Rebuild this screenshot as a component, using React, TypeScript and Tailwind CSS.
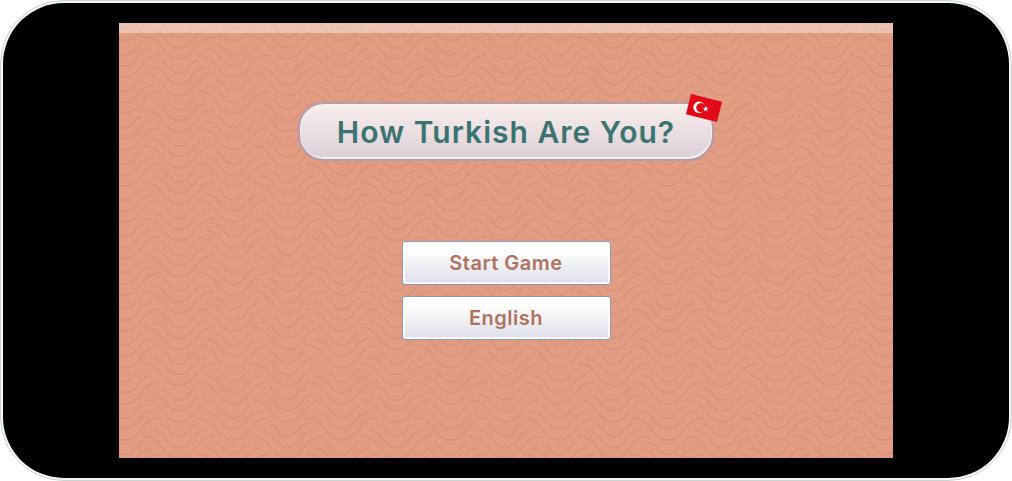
import { useState } from "react";

function WavePattern() {
  return (
    <svg className="absolute inset-0 h-full w-full" aria-hidden="true">
      <defs>
        <g id="waves" fill="none" stroke="#d8947b" strokeWidth="2" strokeLinecap="round">
          <path d="M-35 -22C-16 -22 -17 0 0 0S16 -22 35 -22" />
          <path d="M-26 -28C-13 -27 -13 -11 0 -11S13 -27 26 -28" />
          <path d="M-17 -34C-9 -31 -9 -22 0 -22S9 -31 17 -34" />
        </g>
        <pattern id="tile" width="108.6" height="36.3" x="5.8" y="0" patternUnits="userSpaceOnUse">
          <use href="#waves" x="54.3" y="-.3" />
          <use href="#waves" x="54.3" y="36" />
          <use href="#waves" x="54.3" y="72.3" />
          <use href="#waves" x="0" y="17.8" />
          <use href="#waves" x="0" y="54.1" />
          <use href="#waves" x="108.6" y="17.8" />
          <use href="#waves" x="108.6" y="54.1" />
        </pattern>
      </defs>
      <rect width="100%" height="100%" fill="url(#tile)" />
    </svg>
  );
}

function TurkishFlag() {
  return (
    <svg viewBox="0 0 36 28" className="absolute -top-[10px] -right-[10px] h-7 w-9" aria-hidden="true">
      <g transform="rotate(14 18 14)">
        <rect x="2" y="3.5" width="32" height="21" fill="#e30a17" />
        <circle cx="13" cy="14.5" r="5.7" fill="#fff" />
        <circle cx="14.8" cy="14.5" r="4.6" fill="#e30a17" />
        <path d="M16.6 14.5l2.200-.7V11.500l1.400 1.800 2.200-.7-1.300 1.900 1.300 1.900-2.200-.7-1.400 1.800v-2.300z" fill="#fff" />
      </g>
    </svg>
  );
}

const buttonClass =
  "flex h-11 w-[209px] items-center justify-center rounded-[3px] border border-[#8f99b5] bg-linear-to-b from-white from-20% to-[#dcdee8] text-xl font-semibold tracking-wide text-[#ae735e] shadow-[inset_0_0_0_2px_#ffffffcc]";

export default function App() {
  const [language, setLanguage] = useState("English");
  const [started, setStarted] = useState(false);

  return (
    <div className="flex min-h-screen bg-white font-['Inter','Liberation_Sans',sans-serif]">
      <div className="flex flex-1 rounded-[64px] border border-[#ccd3cf] bg-[#f3f7f4] p-[2px]">
        <div className="flex flex-1 rounded-[61px] bg-black px-[11.5%] py-5">
          <main
            className="relative flex flex-1 flex-col items-center bg-[#e29c84] pt-[79px] pb-10"
            data-started={started}
          >
            <WavePattern />
            <div className="absolute inset-x-0 top-0 h-[10px] bg-white/40" />
            <h1 className="relative flex h-[59px] items-center rounded-[26px] border-2 border-[#b19cad] bg-linear-to-b from-[#fbeeeb] to-[#dbd0d8] px-[37px] text-3xl font-semibold tracking-[1px] whitespace-nowrap text-[#397473] shadow-[inset_-1px_-2px_0_#f8eeee,inset_1px_0_0_#f8eeee]">
              How Turkish Are You?
              <TurkishFlag />
            </h1>
            <div className="relative mt-20 flex flex-col gap-[11px]">
              <button type="button" className={buttonClass} onClick={() => setStarted(true)}>
                Start Game
              </button>
              <button
                type="button"
                className={buttonClass}
                onClick={() => setLanguage(language === "English" ? "Türkçe" : "English")}
              >
                {language}
              </button>
            </div>
          </main>
        </div>
      </div>
    </div>
  );
}
